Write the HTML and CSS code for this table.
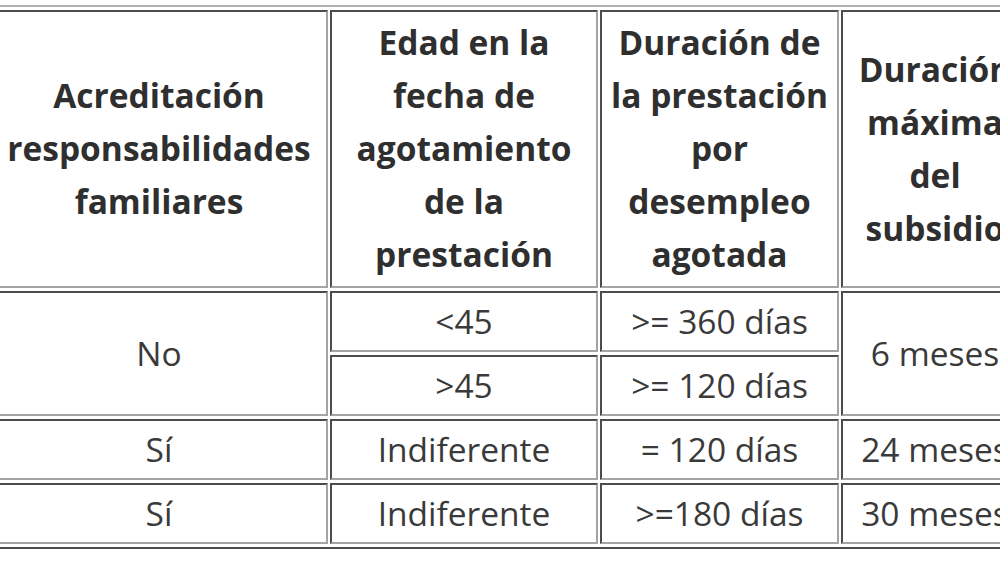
FILE: index.html
```html
<!DOCTYPE html>
<html lang="es">
<head>
<meta charset="utf-8">
<title>Subsidio por desempleo</title>
<link rel="stylesheet" href="styles.css">
</head>
<body>
<table class="grid">
  <thead>
    <tr>
      <th class="c1">Acreditación<br>responsabilidades<br>familiares</th>
      <th class="c2">Edad en la<br>fecha de<br>agotamiento<br>de la<br>prestación</th>
      <th class="c3">Duración de<br>la prestación<br>por<br>desempleo<br>agotada</th>
      <th class="c4">Duración<br>máxima<br>del<br>subsidio</th>
    </tr>
  </thead>
  <tbody>
    <tr>
      <td rowspan="2">No</td>
      <td>&lt;45</td>
      <td>&gt;= 360 días</td>
      <td rowspan="2">6 meses</td>
    </tr>
    <tr>
      <td>&gt;45</td>
      <td>&gt;= 120 días</td>
    </tr>
    <tr>
      <td>Sí</td>
      <td>Indiferente</td>
      <td>= 120 días</td>
      <td>24 meses</td>
    </tr>
    <tr>
      <td>Sí</td>
      <td>Indiferente</td>
      <td>&gt;=180 días</td>
      <td>30 meses</td>
    </tr>
  </tbody>
</table>
</body>
</html>
```

FILE: styles.css
```css
html, body {
  margin: 0;
  padding: 0;
  overflow: hidden;
  background: #ffffff;
}

body {
  padding-top: 5px;
  font-family: "Open Sans", "Liberation Sans", sans-serif;
  color: #333333;
}

.grid {
  table-layout: fixed;
  width: 1047px;
  margin-left: -14px;
  border-collapse: separate;
  border-spacing: 2px 3px;
  border-style: solid;
  border-width: 2px;
  border-color: #b0b0b0 #4c4c4c #4c4c4c #b0b0b0;
  font-size: 33.5px;
  line-height: 53px;
}

.grid th,
.grid td {
  box-sizing: border-box;
  border-style: solid;
  border-width: 2px;
  border-color: #4c4c4c #a4a4a4 #a4a4a4 #4c4c4c;
  text-align: center;
  vertical-align: middle;
  padding: 2px 6px;
  white-space: nowrap;
}

.grid th {
  font-weight: 700;
  color: #2f2f2f;
  padding: 4px 6px 5px;
}

.grid td {
  font-weight: 400;
  color: #3a3a3a;
  height: 61px;
}

.c1 { width: 338px; }
.c2 { width: 268px; }
.c3 { width: 239px; }
.c4 { width: 188px; }
```
